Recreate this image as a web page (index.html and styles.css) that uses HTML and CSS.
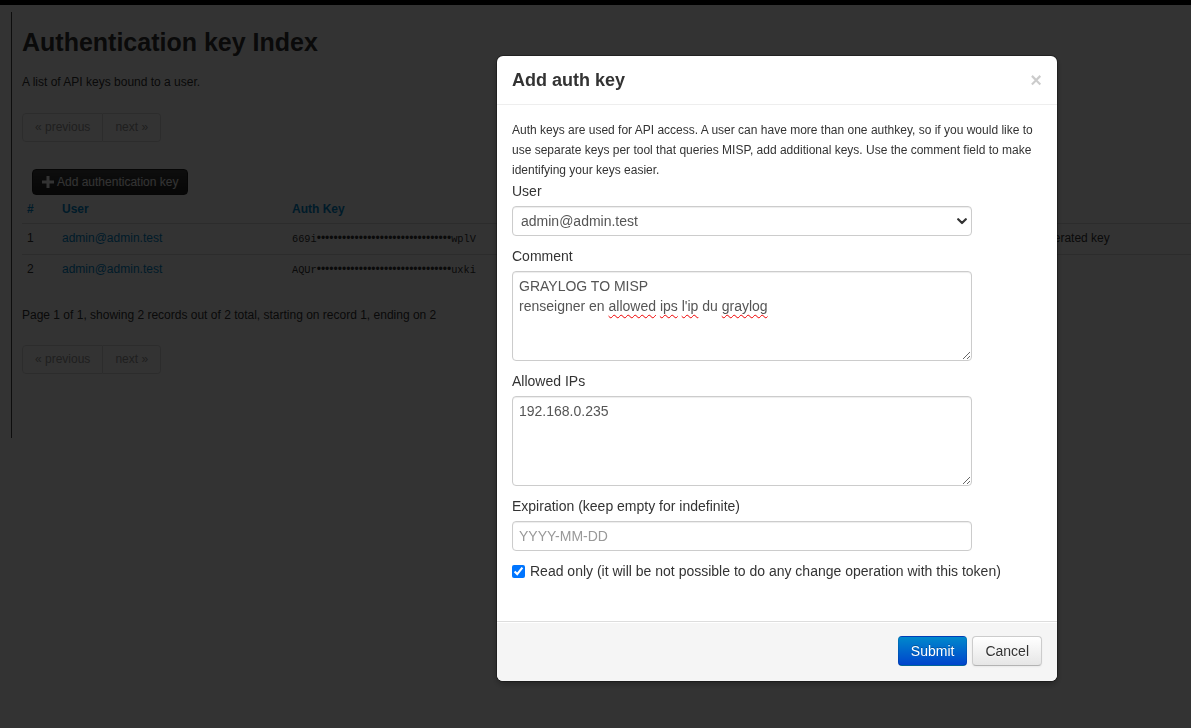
FILE: index.html
```html
<!DOCTYPE html>
<html lang="en">
<head>
<meta charset="utf-8">
<title>Authentication key Index</title>
<link rel="stylesheet" href="styles.css">
</head>
<body>
<div class="topbar"></div>
<div class="layout">
  <div class="sidebar"></div>
  <main class="content">
    <h2 class="page-title">Authentication key Index</h2>
    <p class="lead-text">A list of API keys bound to a user.</p>
    <div class="pagination">
      <span class="page-link">« previous</span><span class="page-link">next »</span>
    </div>
    <div class="toolbar">
      <button class="btn-add" type="button">
        <svg class="plus" width="12" height="12" viewBox="0 0 12 12"><rect x="4.5" y="0" width="3" height="12" fill="#fff"/><rect x="0" y="4.5" width="12" height="3" fill="#fff"/></svg>
        Add authentication key
      </button>
    </div>
    <table class="keys">
      <colgroup>
        <col class="c-id"><col class="c-user"><col class="c-key"><col class="c-created"><col class="c-exp"><col class="c-last"><col>
      </colgroup>
      <thead>
        <tr><th><a>#</a></th><th><a>User</a></th><th><a>Auth Key</a></th><th><a>Created</a></th><th><a>Expiration</a></th><th>Last used</th><th>Comment</th></tr>
      </thead>
      <tbody>
        <tr>
          <td>1</td><td><a>admin@admin.test</a></td>
          <td><span class="mono">669i</span><span class="dots">••••••••••••••••••••••••••••••••</span><span class="mono">wplV</span></td>
          <td></td><td></td><td></td><td>Initial auto-generated key</td>
        </tr>
        <tr>
          <td>2</td><td><a>admin@admin.test</a></td>
          <td><span class="mono">AQUr</span><span class="dots">••••••••••••••••••••••••••••••••</span><span class="mono">uxki</span></td>
          <td></td><td></td><td></td><td></td>
        </tr>
      </tbody>
    </table>
    <p class="counter">Page 1 of 1, showing 2 records out of 2 total, starting on record 1, ending on 2</p>
    <div class="pagination pagination-bottom">
      <span class="page-link">« previous</span><span class="page-link">next »</span>
    </div>
  </main>
</div>

<div class="backdrop"></div>

<div class="modal">
  <div class="modal-header">
    <h3 class="modal-title">Add auth key</h3>
    <button class="close" type="button">×</button>
  </div>
  <div class="modal-body">
    <p class="intro">Auth keys are used for API access. A user can have more than one authkey, so if you would like to use separate keys per tool that queries MISP, add additional keys. Use the comment field to make identifying your keys easier.</p>
    <div class="field">
      <label class="field-label">User</label>
      <div class="select-wrap">
        <select class="control select"><option>admin@admin.test</option></select>
        <svg class="chevron" width="10" height="7" viewBox="0 0 10 7"><polyline points="1.2,1.2 5,5 8.8,1.2" fill="none" stroke="#333" stroke-width="2.2" stroke-linecap="round" stroke-linejoin="round"/></svg>
      </div>
    </div>
    <div class="field">
      <label class="field-label">Comment</label>
      <div class="control area">GRAYLOG TO MISP<br>renseigner en <span class="spell">allowed</span> <span class="spell">ips</span> <span class="spell">l'ip</span> du <span class="spell">graylog</span></div>
    </div>
    <div class="field">
      <label class="field-label">Allowed IPs</label>
      <textarea class="control area" spellcheck="false">192.168.0.235</textarea>
    </div>
    <div class="field">
      <label class="field-label">Expiration (keep empty for indefinite)</label>
      <input class="control input" type="text" placeholder="YYYY-MM-DD">
    </div>
    <label class="check"><input type="checkbox" checked>Read only (it will be not possible to do any change operation with this token)</label>
  </div>
  <div class="modal-footer">
    <button class="btn btn-primary" type="button">Submit</button>
    <button class="btn btn-default" type="button">Cancel</button>
  </div>
</div>
</body>
</html>
```

FILE: styles.css
```css
html, body {
  margin: 0;
  padding: 0;
}

body {
  font-family: "Liberation Sans", Arial, sans-serif;
  font-size: 12px;
  line-height: 20px;
  color: #333;
  background: #fff;
  overflow: hidden;
}

a {
  color: #0088cc;
  text-decoration: none;
}

.topbar {
  height: 5px;
  background: #000;
}

.layout {
  display: flex;
}

.sidebar {
  flex: none;
  width: 11px;
  height: 426px;
  margin-top: 7px;
  border-right: 1px solid #444;
}

.content {
  flex: 1;
  min-width: 0;
  padding: 7px 0 0 10px;
}

.page-title {
  margin: 10px 0;
  font-size: 25px;
  line-height: 40px;
  font-weight: bold;
  color: #333;
}

.lead-text {
  margin: 0 0 10px;
}

.pagination {
  display: flex;
  margin: 21px 0 20px;
}

.pagination-bottom {
  margin-top: 20px;
}

.page-link {
  display: block;
  padding: 4px 12px;
  line-height: 19px;
  color: #999;
  background: #fff;
  border: 1px solid #ddd;
  border-left-width: 0;
}

.page-link:first-child {
  border-left-width: 1px;
  border-radius: 4px 0 0 4px;
}

.page-link:last-child {
  border-radius: 0 4px 4px 0;
}

.toolbar {
  padding: 7px 10px 0;
}

.btn-add {
  display: inline-flex;
  align-items: center;
  gap: 3px;
  box-sizing: border-box;
  height: 26px;
  padding: 0 9px;
  font-family: "Liberation Sans", Arial, sans-serif;
  font-size: 12px;
  line-height: 17px;
  color: #fff;
  background: linear-gradient(#444, #222);
  border: 1px solid #222;
  border-radius: 4px;
}

.plus {
  display: block;
}

.keys {
  width: 100%;
  table-layout: fixed;
  border-collapse: separate;
  border-spacing: 0;
  margin-bottom: 20px;
}

.c-id { width: 35px; }
.c-user { width: 230px; }
.c-key { width: 230px; }
.c-created { width: 150px; }
.c-exp { width: 150px; }
.c-last { width: 153px; }

.keys th,
.keys td {
  padding: 4px 5px 5px;
  line-height: 20px;
  text-align: left;
  vertical-align: top;
  white-space: nowrap;
  overflow: hidden;
}

.keys th {
  padding-bottom: 4px;
  font-weight: bold;
  color: #0088cc;
}

.keys td {
  border-top: 1px solid #ddd;
}

.mono {
  font-family: "Liberation Mono", "DejaVu Sans Mono", monospace;
  font-size: 10.3px;
}

.dots {
  font-size: 12px;
}

.counter {
  margin: 0 0 10px;
}

.backdrop {
  position: fixed;
  inset: 0;
  background: rgba(0, 0, 0, 0.8);
}

.modal {
  position: fixed;
  left: 497px;
  top: 56px;
  width: 560px;
  box-sizing: border-box;
  background: #fff;
  border-radius: 6px;
  box-shadow: 0 0 0 1px rgba(0, 0, 0, 0.3), 0 3px 7px rgba(0, 0, 0, 0.3);
  color: #333;
}

.modal-header {
  display: flex;
  justify-content: space-between;
  align-items: center;
  padding: 9px 15px;
  border-bottom: 1px solid #eee;
}

.modal-title {
  margin: 0;
  font-size: 18px;
  line-height: 30px;
  font-weight: bold;
  color: #333;
}

.close {
  padding: 0;
  border: 0;
  background: none;
  font-family: "Liberation Sans", Arial, sans-serif;
  font-size: 20px;
  font-weight: bold;
  line-height: 20px;
  color: #000;
  opacity: 0.2;
}

.modal-body {
  padding: 15px 15px 40px;
}

.intro {
  margin: 0 0 1px;
  font-size: 12px;
  line-height: 20px;
}

.field {
  margin-bottom: 10px;
}

.field-label {
  display: block;
  margin-bottom: 5px;
  font-size: 14px;
  line-height: 20px;
}

.control {
  display: block;
  width: 460px;
  box-sizing: border-box;
  margin: 0;
  font-family: "Liberation Sans", Arial, sans-serif;
  font-size: 14px;
  line-height: 20px;
  color: #555;
  background: #fff;
  border: 1px solid #ccc;
  border-radius: 4px;
  box-shadow: inset 0 1px 1px rgba(0, 0, 0, 0.075);
  outline: none;
}

.select-wrap {
  position: relative;
  width: 460px;
}

.select {
  height: 30px;
  padding: 4px 8px;
  appearance: none;
  -webkit-appearance: none;
}

.chevron {
  position: absolute;
  right: 5px;
  top: 12px;
  display: block;
}

.area {
  height: 90px;
  padding: 4px 6px;
  resize: vertical;
  overflow: auto;
}

.spell {
  text-decoration: underline wavy #e00;
  text-decoration-thickness: 1px;
  text-underline-offset: 3px;
  text-decoration-skip-ink: none;
}

.input {
  height: 30px;
  padding: 4px 6px;
}

.input::placeholder {
  color: #999;
}

.check {
  display: flex;
  align-items: center;
  font-size: 14px;
  line-height: 20px;
}

.check input {
  width: 13px;
  height: 13px;
  margin: 0 5px 0 0;
  accent-color: #0075ff;
}

.modal-footer {
  display: flex;
  justify-content: flex-end;
  gap: 5px;
  padding: 14px 15px 15px;
  background: #f5f5f5;
  border-top: 1px solid #ddd;
  border-radius: 0 0 6px 6px;
  box-shadow: inset 0 1px 0 #fff;
}

.btn {
  box-sizing: border-box;
  height: 30px;
  padding: 4px 12px;
  font-family: "Liberation Sans", Arial, sans-serif;
  font-size: 14px;
  line-height: 20px;
  border: 1px solid;
  border-radius: 4px;
}

.btn-primary {
  color: #fff;
  text-shadow: 0 -1px 0 rgba(0, 0, 0, 0.25);
  background: linear-gradient(#0088cc, #0044cc);
  border-color: rgba(0, 0, 0, 0.1) rgba(0, 0, 0, 0.1) rgba(0, 0, 0, 0.25);
}

.btn-default {
  color: #333;
  text-shadow: 0 1px 1px rgba(255, 255, 255, 0.75);
  background: linear-gradient(#fff, #e6e6e6);
  border-color: #ccc #ccc #b3b3b3;
  box-shadow: inset 0 1px 0 rgba(255, 255, 255, 0.2), 0 1px 2px rgba(0, 0, 0, 0.05);
}
```
